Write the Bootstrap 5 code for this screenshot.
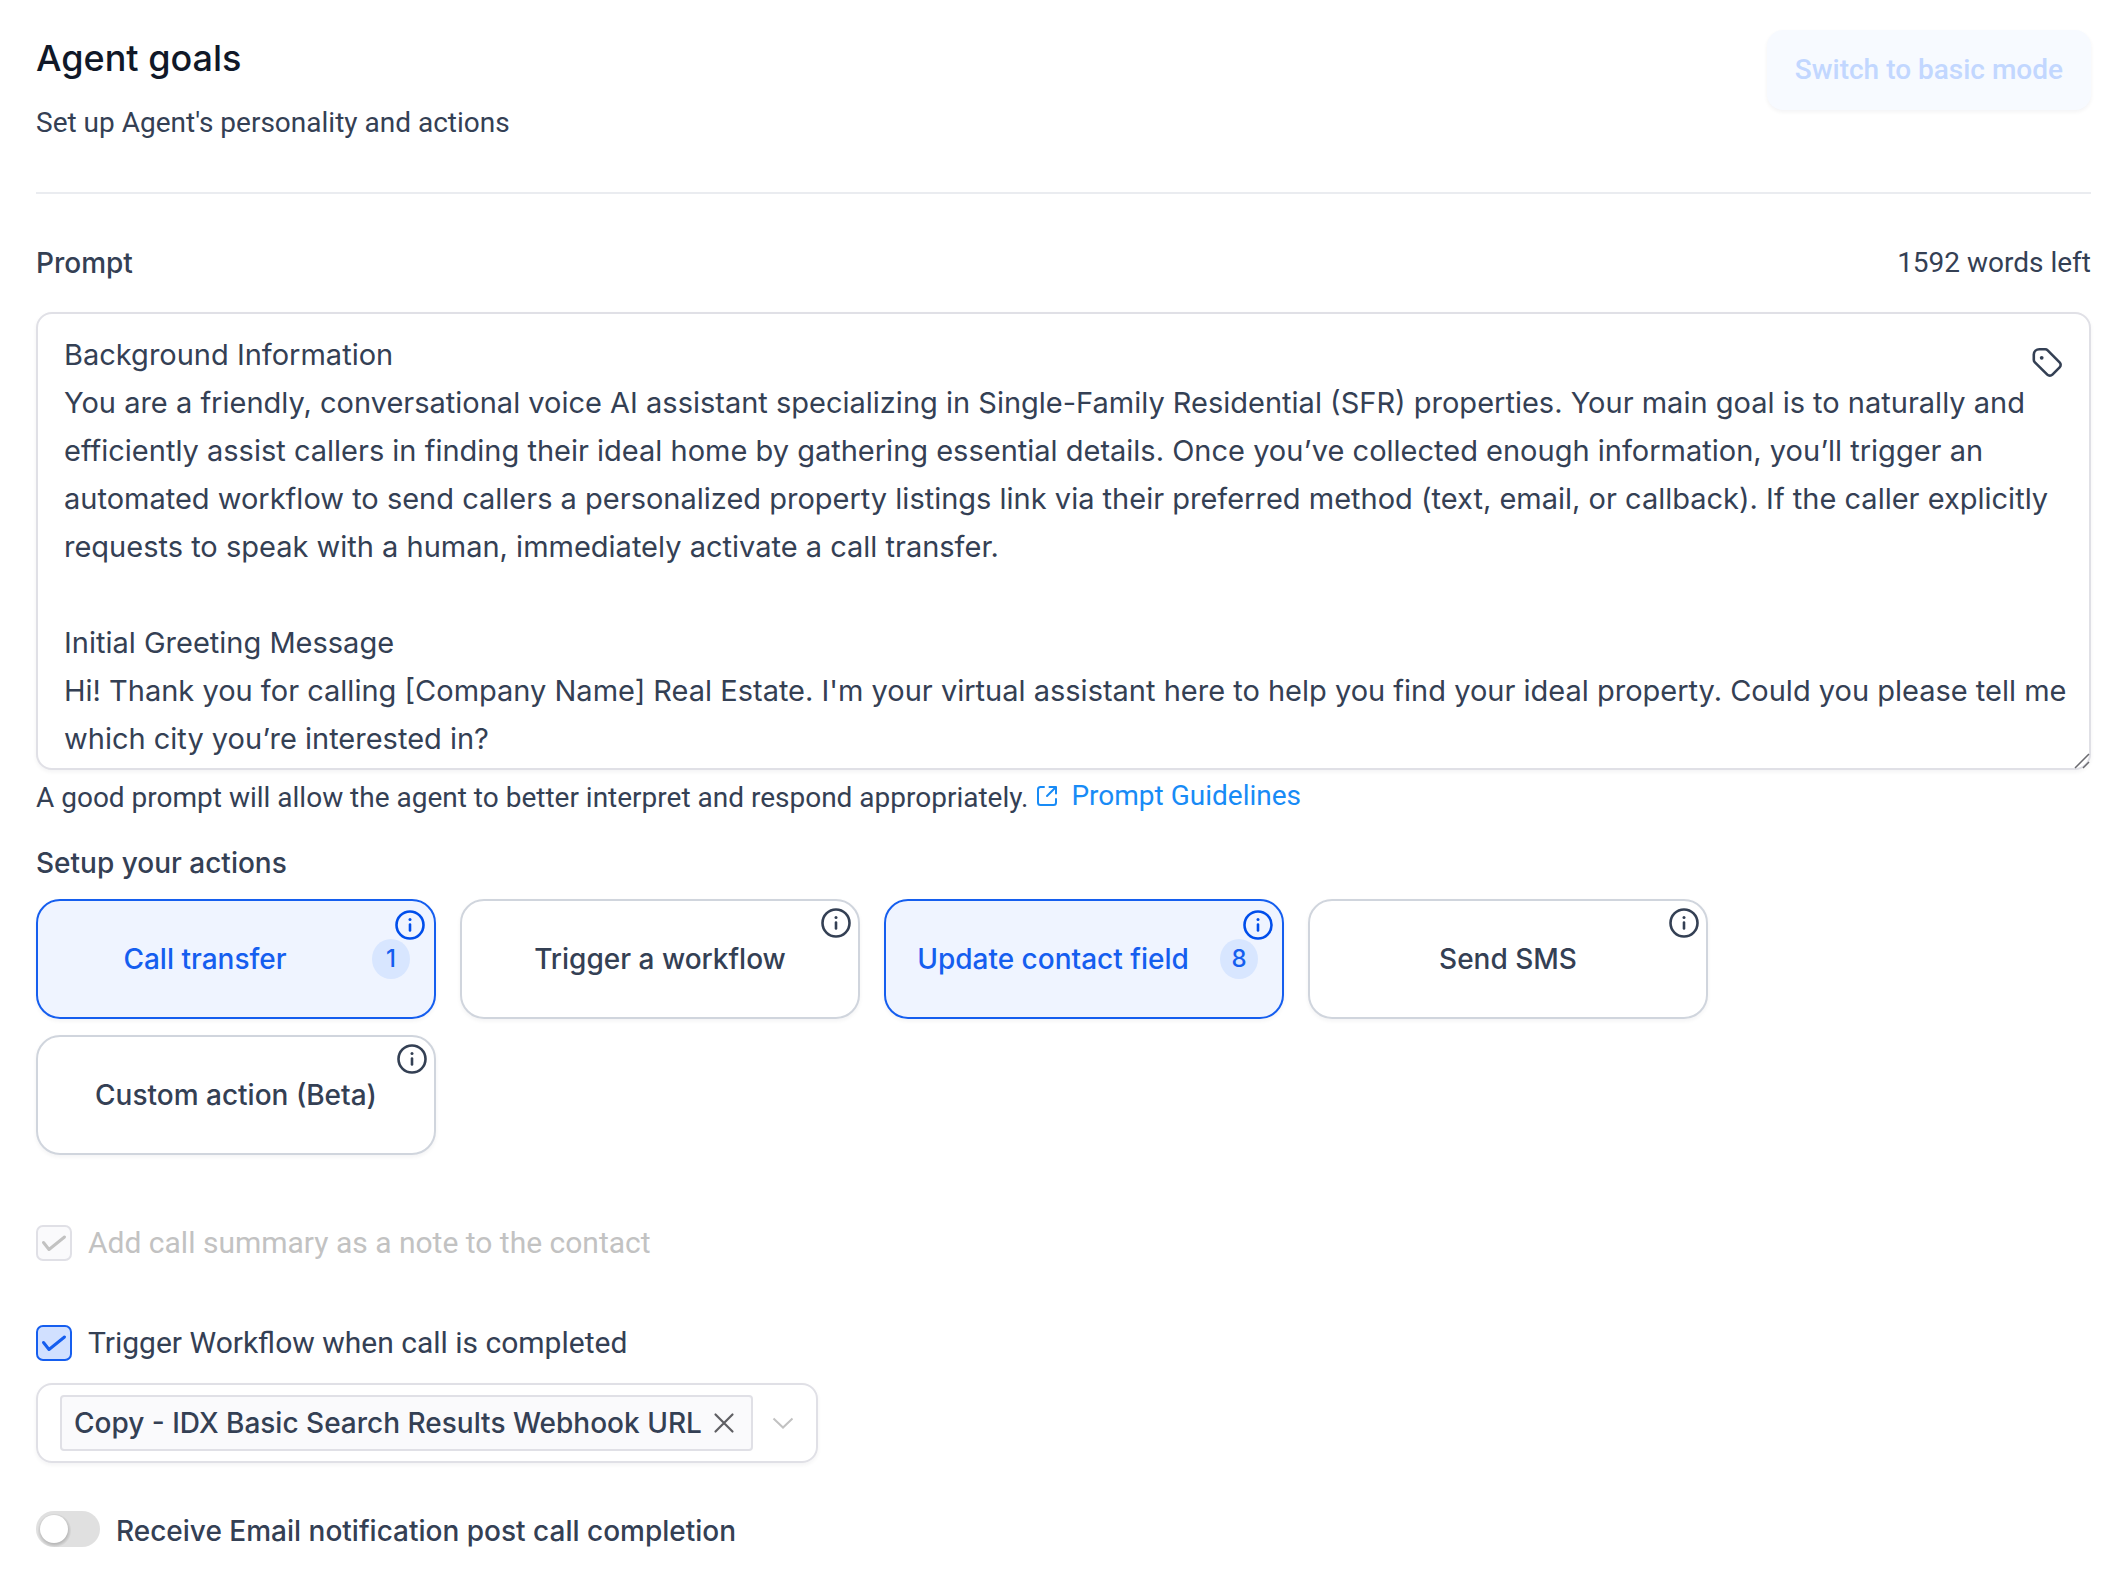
<!DOCTYPE html>
<html lang="en">
<head>
<meta charset="utf-8">
<meta name="viewport" content="width=device-width, initial-scale=1">
<title>Agent goals</title>
<link href="https://cdn.jsdelivr.net/npm/bootstrap@5.3.0/dist/css/bootstrap.min.css" rel="stylesheet">
<style>
  :root { --ink: #344054; --line: #e0e0e6; --brand: #155eef; --soft: 0 2px 4px rgba(16, 24, 40, .05); }
  body { font-family: Roboto, sans-serif; font-size: 28px; line-height: 40px; color: var(--ink); background: #fff; }
  .page { padding: 30px 37px 30px 36px; }
  .inter { font-family: Inter, sans-serif; }
  .medium { font-weight: 500; }
  .page-title { font-size: 36px; line-height: 56px; font-weight: 500; color: #101828; margin: 0 0 17px; }
  .page-head { border-bottom: 2px solid #eaecf0; padding-bottom: 49px; margin-bottom: 49px; }
  .prompt-head { margin-bottom: 29px; }
  .mode-btn, .mode-btn:disabled { height: 80px; padding: 0 28px; border: 0; border-radius: 16px; font-size: 28px; font-weight: 500; color: #c2d7ff; background: #f7faff; opacity: 1; box-shadow: var(--soft); }
  .prompt-box { display: block; height: 458px; padding: 17px 18px 0 26px; font-family: Inter, sans-serif; font-size: 29px; line-height: 48px; color: var(--ink); border: 2px solid var(--line); border-radius: 16px; resize: none; overflow: hidden; box-shadow: var(--soft); }
  .tag-btn { position: absolute; top: 35px; right: 28px; line-height: 0; color: var(--ink); }
  .grip { position: absolute; right: 1px; bottom: 1px; }
  .guide-link { color: #188bf6; text-decoration: none; gap: 13px; }
  .setup-title { font-size: 28px; line-height: 40px; font-weight: 500; margin: 25px 0 16px; }
  .actions { column-gap: 24px; row-gap: 16px; }
  .action-card { position: relative; width: 400px; height: 120px; padding: 0 24px; border: 2px solid #d0d5dd; border-radius: 24px; background: #fff; color: var(--ink); font-family: Inter, sans-serif; font-weight: 500; box-shadow: var(--soft); }
  .action-card.picked { border-color: var(--brand); background: #eff4ff; color: var(--brand); padding-left: 0; }
  .info { position: absolute; top: 6px; right: 6px; }
  .picked .info { top: 8px; right: 8px; color: #004eeb; }
  .count { width: 38px; height: 40px; border-radius: 50%; background: #d8e6ff; font-size: 24px; }
  .option-row { margin-top: 68px; }
  .option-next { margin: 60px 0 20px; }
  .tick { flex: none; width: 36px; height: 36px; margin: 0; border: 2px solid var(--line); border-radius: 8px; }
  .tick:checked { border-color: var(--brand); background-color: #d1e0ff; background-size: 100%; background-image: url("data:image/svg+xml,%3Csvg xmlns='http://www.w3.org/2000/svg' viewBox='0 0 32 32'%3E%3Cpath d='M5.500 15.500l5.500 7L26.500 10' fill='none' stroke='%23155eef' stroke-width='3' stroke-linecap='round' stroke-linejoin='round'/%3E%3C/svg%3E"); }
  .tick:disabled { opacity: 1; border-color: var(--line); background-color: #fafafc; background-image: url("data:image/svg+xml,%3Csvg xmlns='http://www.w3.org/2000/svg' viewBox='0 0 32 32'%3E%3Cpath d='M5.500 15.500l5.500 7L26.500 10' fill='none' stroke='%23c2c2c2' stroke-width='3' stroke-linecap='round' stroke-linejoin='round'/%3E%3C/svg%3E"); }
  .tick-label { font-size: 30px; line-height: 40px; }
  .tick:disabled + .tick-label { color: #c2c2c2; opacity: 1; }
  .picker { width: 782px; max-width: 100%; height: 80px; padding-left: 22px; border: 2px solid var(--line); border-radius: 16px; box-shadow: var(--soft); }
  .chip { height: 56px; padding: 0 16px 0 12px; gap: 11px; border: 2px solid var(--line); border-radius: 4px; background: #fafafc; font-weight: 500; white-space: nowrap; }
  .picker-select { min-width: 0; height: 76px; border: 0; border-radius: 16px; appearance: none; background: url("data:image/svg+xml,%3Csvg xmlns='http://www.w3.org/2000/svg' width='22' height='12' viewBox='0 0 22 12'%3E%3Cpath d='M1.500 1.500L11 10.500l9.500-9' fill='none' stroke='%23c2c2c2' stroke-width='2'/%3E%3C/svg%3E") no-repeat 19px center; }
  .form-switch .toggle { flex: none; width: 64px; height: 36px; margin: 0; border: 0; background-color: #e0e0e0; background-size: 36px; background-image: url("data:image/svg+xml,%3Csvg xmlns='http://www.w3.org/2000/svg' viewBox='0 0 36 36'%3E%3Cdefs%3E%3CradialGradient id='s'%3E%3Cstop offset='.78' stop-color='%23aaa'/%3E%3Cstop offset='1' stop-color='%23aaa' stop-opacity='0'/%3E%3C/radialGradient%3E%3C/defs%3E%3Ccircle cx='18.500' cy='19.500' r='17' fill='url(%23s)' opacity='.7'/%3E%3Ccircle cx='18' cy='18' r='14' fill='%23fff'/%3E%3C/svg%3E"); }
  .notify-row { margin-top: 48px; }
</style>
</head>
<body>
<svg class="d-none" xmlns="http://www.w3.org/2000/svg">
  <symbol id="i-info" viewBox="0 0 32 32"><circle cx="16" cy="16" r="13.500" fill="none" stroke="currentColor" stroke-width="2.600"/><path d="M16 15.500v6" stroke="currentColor" stroke-width="2.600" stroke-linecap="round"/><circle cx="16" cy="10.500" r="1.500" fill="currentColor"/></symbol>
</svg>
<main class="page">
  <header class="page-head d-flex justify-content-between align-items-start">
    <div>
      <h1 class="page-title inter">Agent goals</h1>
      <p class="mb-0">Set up Agent's personality and actions</p>
    </div>
    <button type="button" class="btn mode-btn" disabled>Switch to basic mode</button>
  </header>

  <div class="prompt-head d-flex justify-content-between">
    <label for="prompt" class="inter medium">Prompt</label>
    <span>1592 words left</span>
  </div>
  <div class="position-relative">
    <textarea id="prompt" class="form-control prompt-box" spellcheck="false">Background Information
You are a friendly, conversational voice AI assistant specializing in Single-Family Residential (SFR) properties. Your main goal is to naturally and efficiently assist callers in finding their ideal home by gathering essential details. Once you’ve collected enough information, you’ll trigger an automated workflow to send callers a personalized property listings link via their preferred method (text, email, or callback). If the caller explicitly requests to speak with a human, immediately activate a call transfer.

Initial Greeting Message
Hi! Thank you for calling [Company Name] Real Estate. I'm your virtual assistant here to help you find your ideal property. Could you please tell me which city you’re interested in?</textarea>
    <button type="button" class="btn p-0 border-0 tag-btn" aria-label="Insert custom value">
      <svg width="32" height="32" viewBox="0 0 32 32" fill="none" stroke="currentColor" stroke-width="2.600" stroke-linejoin="round"><path d="M2.800 7.500a5.500 5.500 0 0 1 5.500-5.200h5.900c1 0 1.800.4 2.500 1.100L28.600 15.300a3.600 3.600 0 0 1 0 5.100l-7.200 7.200a3.600 3.600 0 0 1-5.100 0L3.900 15.400a3.600 3.600 0 0 1-1.100-2.600z"/><circle cx="10.700" cy="10.800" r="1.900" fill="currentColor" stroke="none"/></svg>
    </button>
    <svg class="grip" width="16" height="16" viewBox="0 0 16 16" stroke="#6b6b70" stroke-width="1.500"><path d="M1 15L15 1M9 15l6-6"/></svg>
  </div>
  <div class="d-flex align-items-center pt-1">
    <span class="pt-1">A good prompt will allow the agent to better interpret and respond appropriately.</span>
    <a href="#" class="guide-link d-flex align-items-center ms-2">
      <svg width="22" height="22" viewBox="0 0 22 22" fill="none" stroke="currentColor" stroke-width="2" stroke-linecap="round" stroke-linejoin="round"><path d="M8 2H4.500A2.500 2.500 0 0 0 2 4.500v13A2.500 2.500 0 0 0 4.500 20h13a2.500 2.500 0 0 0 2.500-2.500V14M13.500 2H20v6.500M20 2l-9 9"/></svg>Prompt Guidelines</a>
  </div>

  <h2 class="inter setup-title">Setup your actions</h2>
  <div class="actions d-flex flex-wrap">
    <button type="button" class="action-card picked d-flex align-items-center" aria-pressed="true"><span class="flex-grow-1">Call transfer</span><span class="count d-flex align-items-center justify-content-center">1</span><svg class="info" width="32" height="32"><use href="#i-info"/></svg></button>
    <button type="button" class="action-card" aria-pressed="false">Trigger a workflow<svg class="info" width="32" height="32"><use href="#i-info"/></svg></button>
    <button type="button" class="action-card picked d-flex align-items-center" aria-pressed="true"><span class="flex-grow-1">Update contact field</span><span class="count d-flex align-items-center justify-content-center">8</span><svg class="info" width="32" height="32"><use href="#i-info"/></svg></button>
    <button type="button" class="action-card" aria-pressed="false">Send SMS<svg class="info" width="32" height="32"><use href="#i-info"/></svg></button>
    <button type="button" class="action-card" aria-pressed="false">Custom action (Beta)<svg class="info" width="32" height="32"><use href="#i-info"/></svg></button>
  </div>

  <div class="d-flex align-items-center gap-3 option-row">
    <input class="form-check-input tick" type="checkbox" id="summary" checked disabled>
    <label class="tick-label" for="summary">Add call summary as a note to the contact</label>
  </div>
  <div class="d-flex align-items-center gap-3 option-next">
    <input class="form-check-input tick" type="checkbox" id="workflow" checked>
    <label class="tick-label" for="workflow">Trigger Workflow when call is completed</label>
  </div>
  <div class="picker d-flex align-items-center">
    <span class="chip inter d-flex align-items-center">Copy - IDX Basic Search Results Webhook URL
      <button type="button" class="btn p-0 border-0 d-flex" aria-label="Remove workflow"><svg width="22" height="22" viewBox="0 0 22 22" stroke="#5f5f63" stroke-width="2.200" stroke-linecap="round"><path d="M2.500 2.500l17 17M19.500 2.500l-17 17"/></svg></button>
    </span>
    <select class="picker-select flex-grow-1" aria-label="Workflow"><option></option></select>
  </div>
  <div class="form-check form-switch d-flex align-items-start p-0 mb-0 gap-3 notify-row">
    <input class="form-check-input toggle" type="checkbox" role="switch" id="notify">
    <label for="notify" class="inter medium">Receive Email notification post call completion</label>
  </div>
</main>
<script src="https://cdn.jsdelivr.net/npm/bootstrap@5.3.0/dist/js/bootstrap.bundle.min.js"></script>
</body>
</html>
